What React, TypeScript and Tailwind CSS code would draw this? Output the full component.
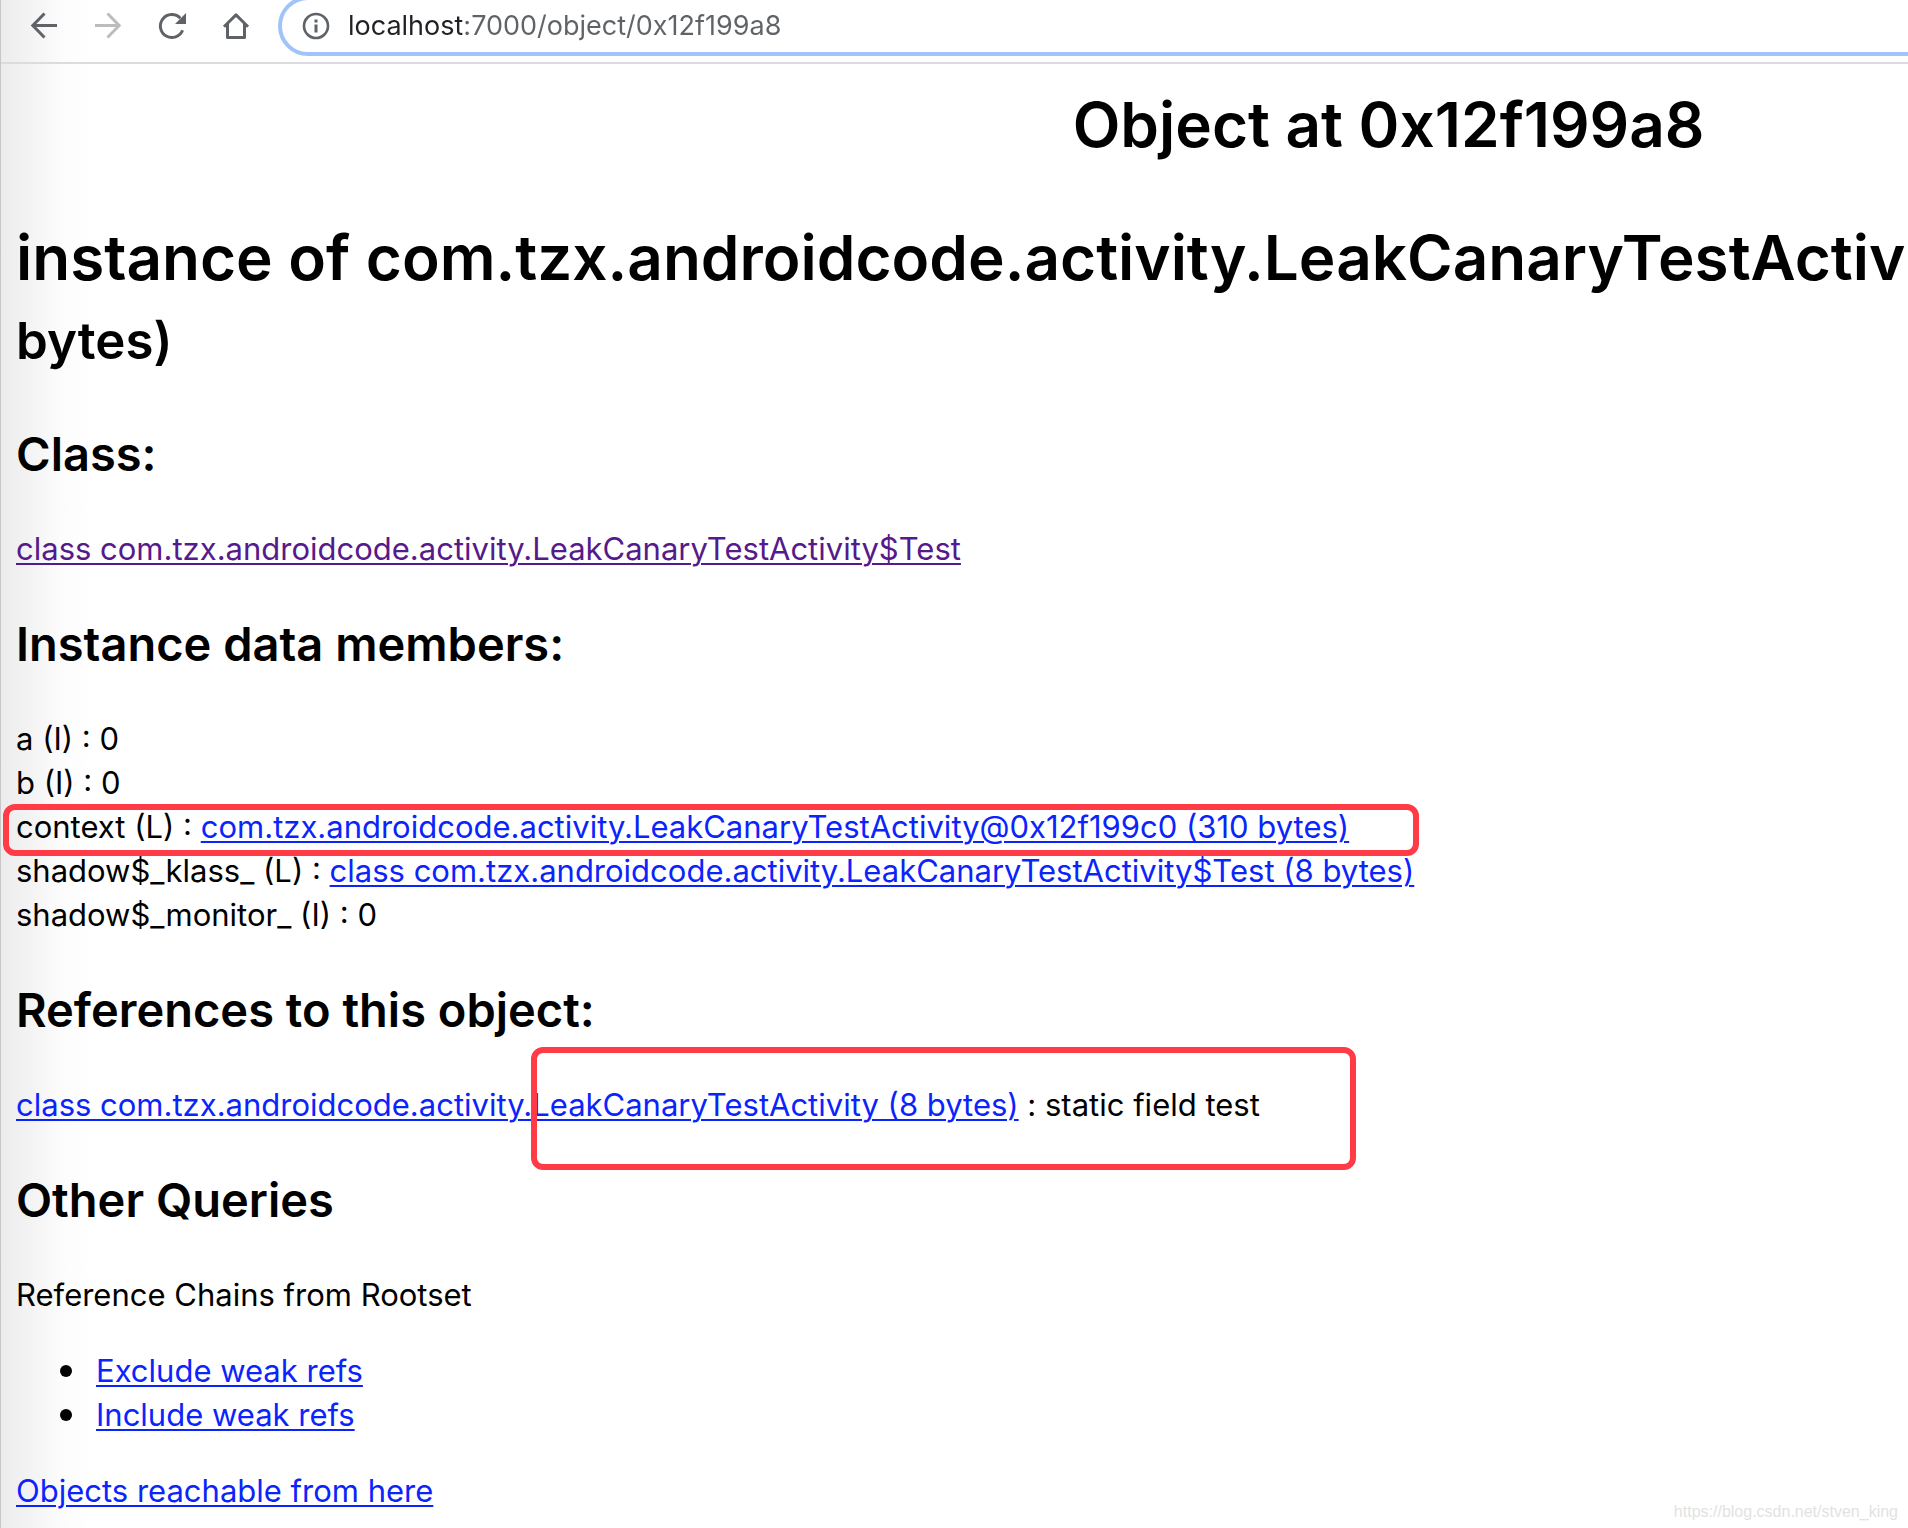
import type { ReactNode } from "react";

interface MemberProps {
    name: string;
    value?: string;
    link?: string;
    marked?: boolean;
}

const members: MemberProps[] = [
    { name: "a (I)", value: "0" },
    { name: "b (I)", value: "0" },
    {
        name: "context (L)",
        link: "com.tzx.androidcode.activity.LeakCanaryTestActivity@0x12f199c0 (310 bytes)",
        marked: true,
    },
    { name: "shadow$_klass_ (L)", link: "class com.tzx.androidcode.activity.LeakCanaryTestActivity$Test (8 bytes)" },
    { name: "shadow$_monitor_ (I)", value: "0" },
];

const queries = ["Exclude weak refs", "Include weak refs"];

function ObjectLink({ children, visited = false }: { children: ReactNode; visited?: boolean }) {
    return (
        <a
            href="#"
            className={`underline decoration-2 underline-offset-[3px] ${visited ? "text-[#551a8b]" : "text-[#0b24fb]"}`}
        >
            {children}
        </a>
    );
}

function SectionTitle({ children }: { children: ReactNode }) {
    return <h2 className="my-10 text-[47px] leading-[66px] font-semibold">{children}</h2>;
}

function ToolbarButton({ label, disabled = false, children }: { label: string; disabled?: boolean; children: ReactNode }) {
    return (
        <button
            type="button"
            aria-label={label}
            disabled={disabled}
            className="flex h-[52px] w-16 shrink-0 items-center justify-center text-[#5f6368] disabled:text-[#babcbe]"
        >
            <svg viewBox="0 0 32 32" className="size-8" fill="none" stroke="currentColor" strokeWidth="3">
                {children}
            </svg>
        </button>
    );
}

function Toolbar() {
    return (
        <header className="flex h-16 items-start overflow-hidden border-b-2 border-[#dadce0] pl-[11px]">
            <ToolbarButton label="Back">
                <path d="M29 15.5H5M16.5 3.5L4.8 15.5L16.5 27.5" />
            </ToolbarButton>
            <ToolbarButton label="Forward" disabled>
                <path d="M3 15.5H27M15.5 3.5L27.2 15.5L15.5 27.5" />
            </ToolbarButton>
            <ToolbarButton label="Reload">
                <path d="M24.3 8.2A11.5 11.5 0 1 0 26.6 20.3" />
                <path d="M30 3V14H19Z" fill="currentColor" stroke="none" />
            </ToolbarButton>
            <ToolbarButton label="Home">
                <path d="M4 16.8L16 4.9L28 16.8M7.5 14V27.5H24.5V14" strokeLinejoin="round" />
            </ToolbarButton>
            <div className="-mt-1 -mr-10 ml-[10px] flex h-[60px] grow items-center gap-[18px] rounded-full border-4 border-[#a0c3fa] bg-white pl-5">
                <svg viewBox="0 0 28 28" className="size-7 shrink-0" fill="none" stroke="#5f6368" strokeWidth="3">
                    <circle cx="14" cy="14" r="12" strokeWidth="2.6" />
                    <path d="M14 12.5V20.5M14 7.5V10.5" />
                </svg>
                {/* host is darker than the port and path */}
                <input
                    type="text"
                    aria-label="Address"
                    defaultValue="localhost:7000/object/0x12f199a8"
                    className="min-w-0 grow bg-[linear-gradient(to_right,#202124_114px,#5f6368_114px)] bg-clip-text text-[27px] leading-9 text-transparent outline-none"
                />
            </div>
        </header>
    );
}

function Member({ name, value, link, marked = false }: MemberProps) {
    return (
        <li className="relative">
            {name} : {link ? <ObjectLink>{link}</ObjectLink> : value}
            {marked && (
                <span className="pointer-events-none absolute -top-px -left-[13px] h-[52px] w-[1416px] rounded-xl border-[6px] border-[#ff3b47]" />
            )}
        </li>
    );
}

export default function App() {
    return (
        <div className="relative min-h-screen overflow-hidden border-l border-[#c6c6c6] bg-white bg-[linear-gradient(to_right,#ececec_0px,#f3f3f3_28px,#fcfcfc_60px,#ffffff_90px)] font-['Inter','Liberation_Sans',sans-serif] text-black">
            <Toolbar />
            <main className="w-[146%] pt-4 pr-6 pl-[15px] text-[31px] leading-[44px]">
                <h1 className="text-center text-[62px] leading-[90px] font-semibold">Object at 0x12f199a8</h1>
                <h1 className="my-[43px] text-[62px] leading-[90px] font-semibold whitespace-nowrap">
                    instance of com.tzx.androidcode.activity.LeakCanaryTestActivity
                    <span className="block text-[51px] leading-[75px]">bytes)</span>
                </h1>

                <SectionTitle>Class:</SectionTitle>
                <p>
                    <ObjectLink visited>class com.tzx.androidcode.activity.LeakCanaryTestActivity$Test</ObjectLink>
                </p>

                <SectionTitle>Instance data members:</SectionTitle>
                <ul>
                    {members.map((member) => (
                        <Member key={member.name} {...member} />
                    ))}
                </ul>

                <SectionTitle>References to this object:</SectionTitle>
                <p className="relative">
                    <ObjectLink>class com.tzx.androidcode.activity.LeakCanaryTestActivity (8 bytes)</ObjectLink> : static field test
                    <span className="pointer-events-none absolute -top-9 left-[515px] h-[123px] w-[825px] rounded-xl border-[6px] border-[#ff3b47]" />
                </p>

                <SectionTitle>Other Queries</SectionTitle>
                <p>Reference Chains from Rootset</p>
                <ul className="my-8 pl-11">
                    {queries.map((query) => (
                        <li key={query} className="flex items-center gap-6">
                            <span className="size-3 rounded-full bg-black" />
                            <ObjectLink>{query}</ObjectLink>
                        </li>
                    ))}
                </ul>
                <p>
                    <ObjectLink>Objects reachable from here</ObjectLink>
                </p>
            </main>
            <span className="absolute right-[10px] bottom-1.5 font-['Liberation_Sans',sans-serif] text-base leading-5 text-[#e2e2e2]">
                https://blog.csdn.net/stven_king
            </span>
        </div>
    );
}
